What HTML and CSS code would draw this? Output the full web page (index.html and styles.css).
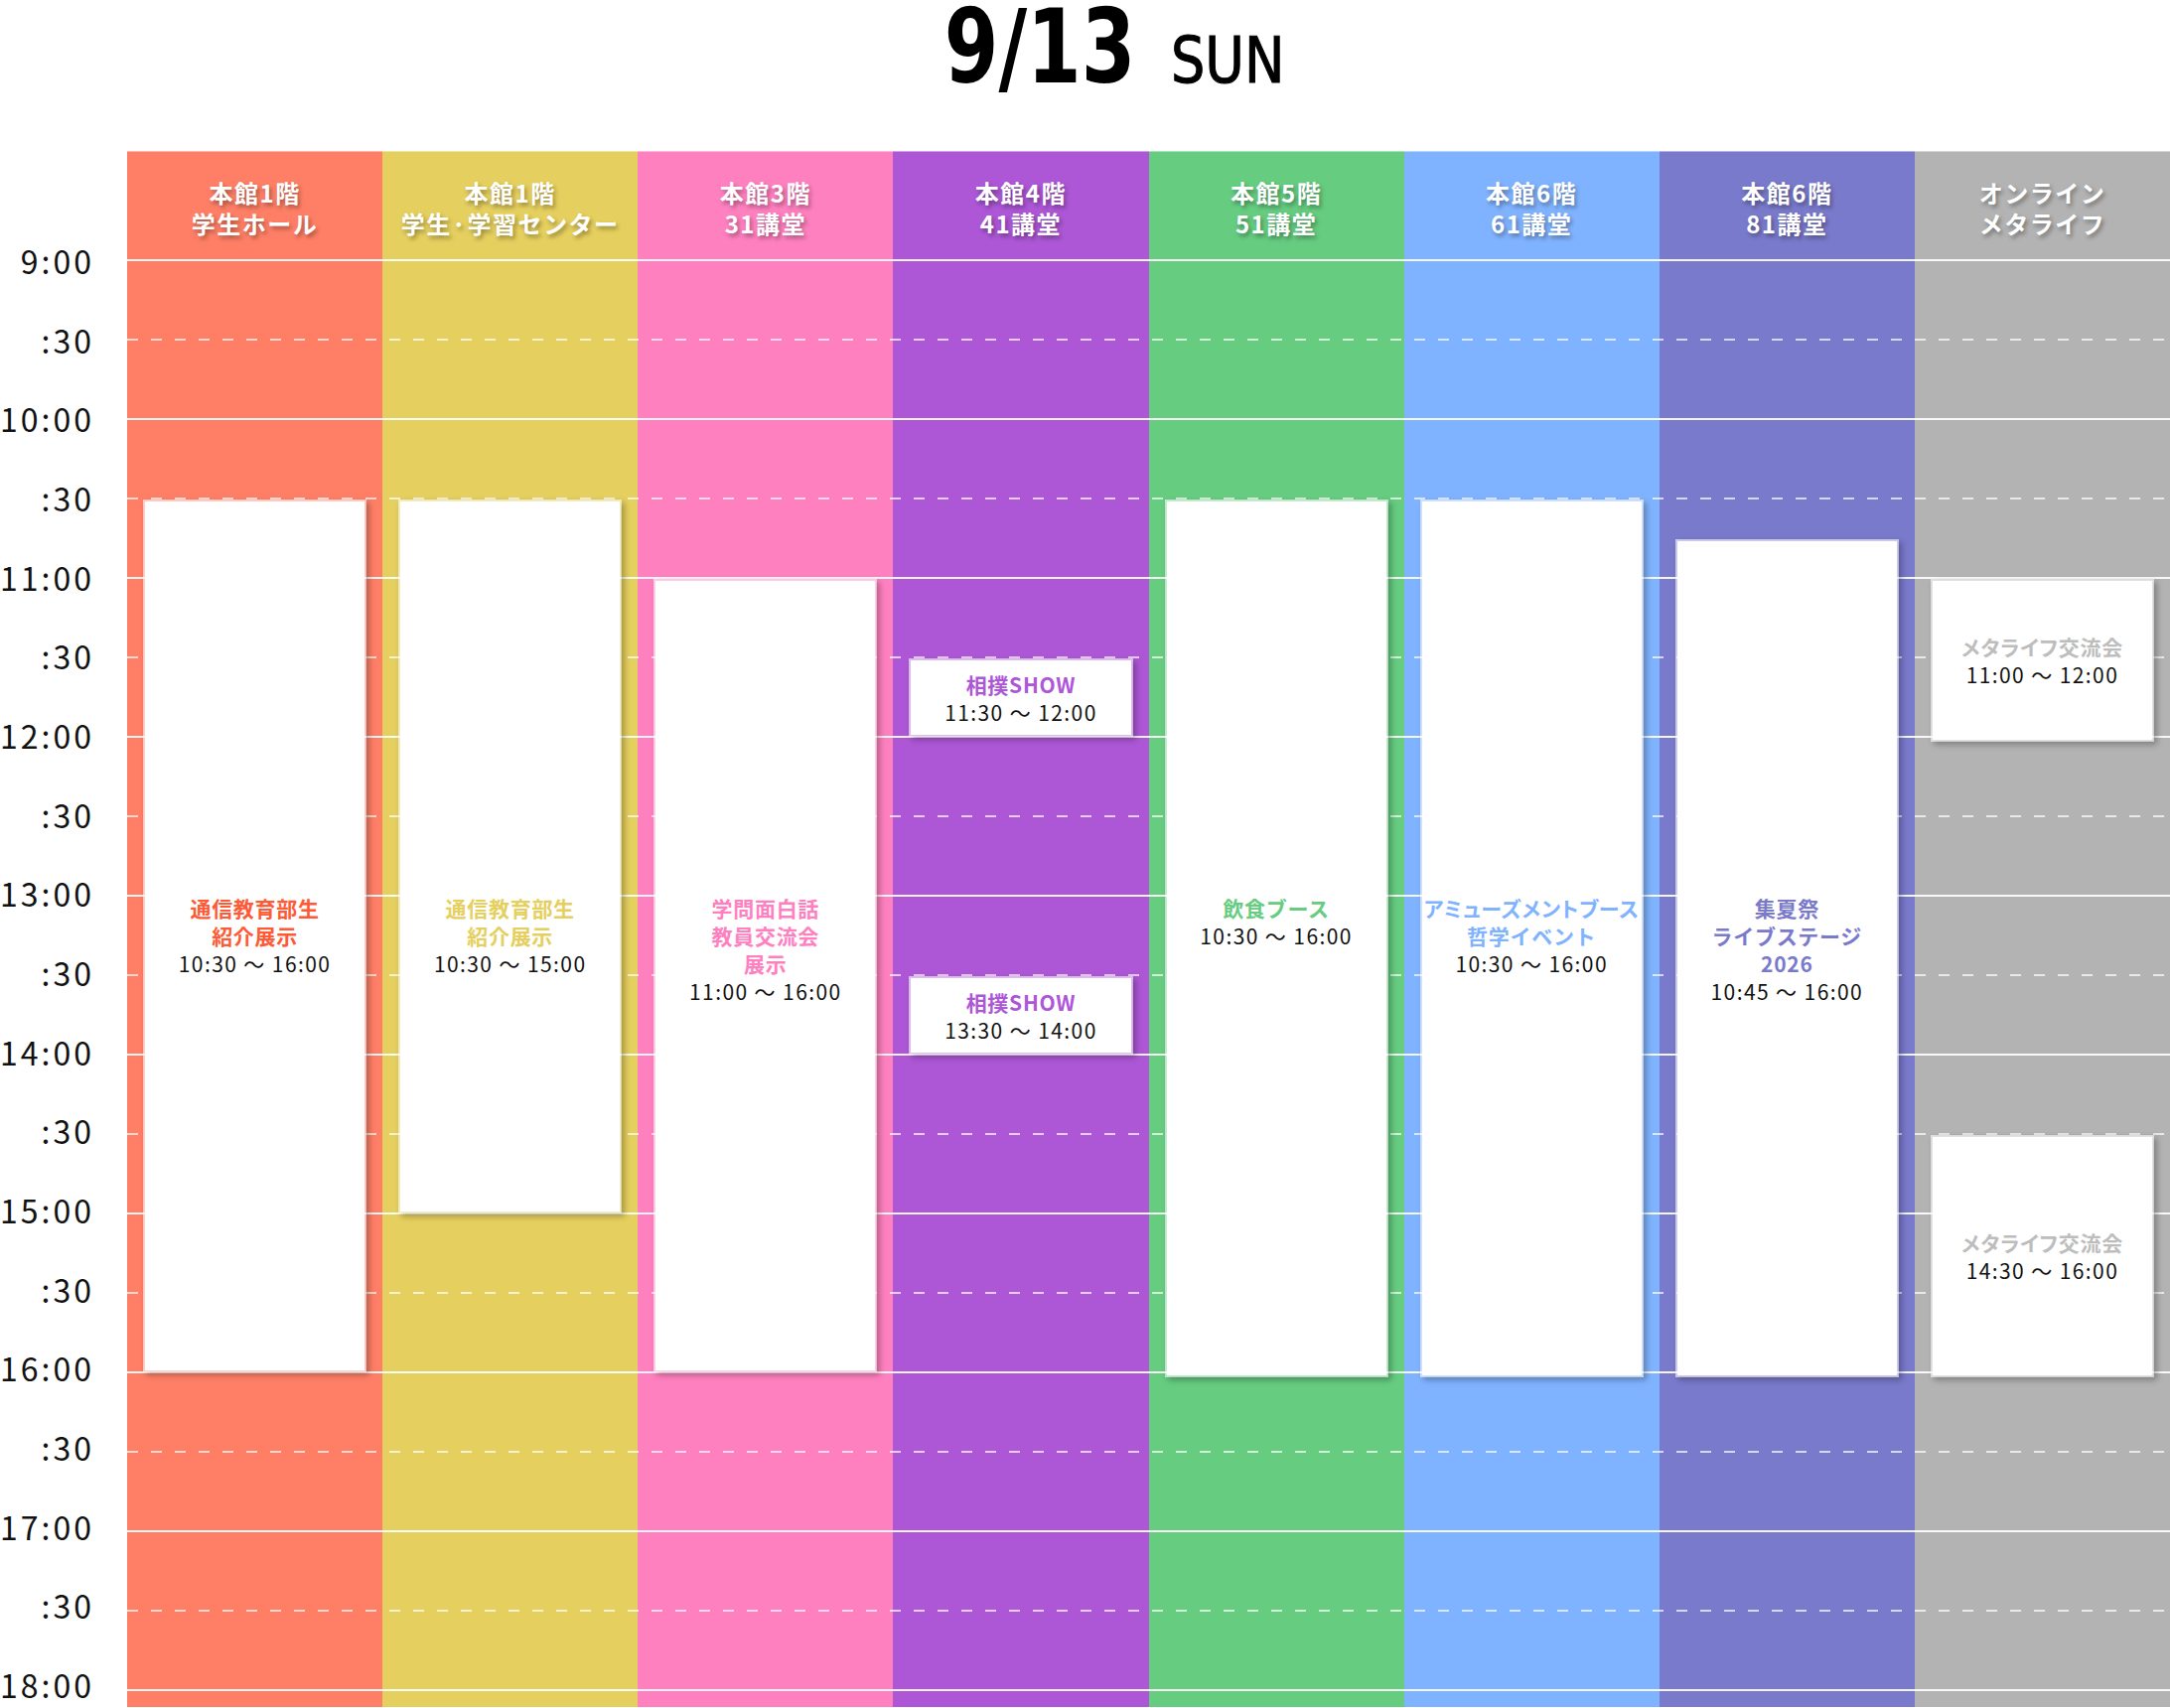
FILE: index.html
```html
<!DOCTYPE html>
<html lang="ja">
<head>
<meta charset="utf-8">
<title>9/13 SUN</title>
<link rel="stylesheet" href="styles.css">
</head>
<body>
<header class="title">
  <span class="date">9/13</span><span class="dow">SUN</span>
</header>
<main class="schedule">
  <div class="col c1"><div class="col-head">本館1階<br>学生ホール</div></div>
  <div class="col c2"><div class="col-head">本館1階<br>学生·学習センター</div></div>
  <div class="col c3"><div class="col-head">本館3階<br>31講堂</div></div>
  <div class="col c4"><div class="col-head">本館4階<br>41講堂</div></div>
  <div class="col c5"><div class="col-head">本館5階<br>51講堂</div></div>
  <div class="col c6"><div class="col-head">本館6階<br>61講堂</div></div>
  <div class="col c7"><div class="col-head">本館6階<br>81講堂</div></div>
  <div class="col c8"><div class="col-head">オンライン<br>メタライフ</div></div>

  <div class="line hour" style="grid-row:2"></div>
  <div class="line half" style="grid-row:4"></div>
  <div class="line hour" style="grid-row:6"></div>
  <div class="line half" style="grid-row:8"></div>
  <div class="line hour" style="grid-row:10"></div>
  <div class="line half" style="grid-row:12"></div>
  <div class="line hour" style="grid-row:14"></div>
  <div class="line half" style="grid-row:16"></div>
  <div class="line hour" style="grid-row:18"></div>
  <div class="line half" style="grid-row:20"></div>
  <div class="line hour" style="grid-row:22"></div>
  <div class="line half" style="grid-row:24"></div>
  <div class="line hour" style="grid-row:26"></div>
  <div class="line half" style="grid-row:28"></div>
  <div class="line hour" style="grid-row:30"></div>
  <div class="line half" style="grid-row:32"></div>
  <div class="line hour" style="grid-row:34"></div>
  <div class="line half" style="grid-row:36"></div>
  <div class="line hour" style="grid-row:38"></div>

  <div class="labels">
    <div class="tlabel">9:00</div>
    <div class="tlabel">:30</div>
    <div class="tlabel">10:00</div>
    <div class="tlabel">:30</div>
    <div class="tlabel">11:00</div>
    <div class="tlabel">:30</div>
    <div class="tlabel">12:00</div>
    <div class="tlabel">:30</div>
    <div class="tlabel">13:00</div>
    <div class="tlabel">:30</div>
    <div class="tlabel">14:00</div>
    <div class="tlabel">:30</div>
    <div class="tlabel">15:00</div>
    <div class="tlabel">:30</div>
    <div class="tlabel">16:00</div>
    <div class="tlabel">:30</div>
    <div class="tlabel">17:00</div>
    <div class="tlabel">:30</div>
    <div class="tlabel">18:00</div>
  </div>

  <div class="event c1 anchor" style="grid-row:8 / 30; --lead:10">
    <div class="ev-title">通信教育部生<br>紹介展示</div>
    <div class="ev-time">10:30 〜 16:00</div>
  </div>
  <div class="event c2 anchor" style="grid-row:8 / 26; --lead:10">
    <div class="ev-title">通信教育部生<br>紹介展示</div>
    <div class="ev-time">10:30 〜 15:00</div>
  </div>
  <div class="event c3 anchor" style="grid-row:10 / 30; --lead:8">
    <div class="ev-title">学問面白話<br>教員交流会<br>展示</div>
    <div class="ev-time">11:00 〜 16:00</div>
  </div>
  <div class="event c4" style="grid-row:12 / 14">
    <div class="ev-title">相撲SHOW</div>
    <div class="ev-time">11:30 〜 12:00</div>
  </div>
  <div class="event c4" style="grid-row:20 / 22">
    <div class="ev-title">相撲SHOW</div>
    <div class="ev-time">13:30 〜 14:00</div>
  </div>
  <div class="event c5 long anchor" style="grid-row:8 / 30; --lead:10">
    <div class="ev-title">飲食ブース</div>
    <div class="ev-time">10:30 〜 16:00</div>
  </div>
  <div class="event c6 long anchor" style="grid-row:8 / 30; --lead:10">
    <div class="ev-title"><span class="palt">アミューズメントブース</span><br>哲学イベント</div>
    <div class="ev-time">10:30 〜 16:00</div>
  </div>
  <div class="event c7 long anchor" style="grid-row:9 / 30; --lead:9">
    <div class="ev-title">集夏祭<br>ライブステージ<br>2026</div>
    <div class="ev-time">10:45 〜 16:00</div>
  </div>
  <div class="event c8 long" style="grid-row:10 / 14">
    <div class="ev-title palt">メタライフ交流会</div>
    <div class="ev-time">11:00 〜 12:00</div>
  </div>
  <div class="event c8 long" style="grid-row:24 / 30">
    <div class="ev-title palt">メタライフ交流会</div>
    <div class="ev-time">14:30 〜 16:00</div>
  </div>
</main>
</body>
</html>
```

FILE: styles.css
```css
html, body {
  margin: 0;
  padding: 0;
  background: #ffffff;
}

body {
  font-family: "Noto Sans CJK JP", "Noto Sans", sans-serif;
  color: #111111;
  overflow: hidden;
}

/* ---------- title ---------- */
.title {
  height: 152px;
  display: flex;
  justify-content: center;
  align-items: baseline;
  padding-left: 30px;
  box-sizing: border-box;
  color: #000000;
  font-family: "Liberation Sans Narrow", "DejaVu Sans Condensed", "Liberation Sans", sans-serif;
}

.date {
  display: inline-block;
  font-size: 104px;
  line-height: 94px;
  font-weight: 700;
  transform: scaleX(0.84);
  transform-origin: right center;
}

.dow {
  display: inline-block;
  font-size: 64px;
  line-height: 64px;
  font-weight: 400;
  margin-left: 35px;
  -webkit-text-stroke: 1px #000;
  transform: scaleX(0.94);
  transform-origin: left center;
}

/* ---------- schedule grid ---------- */
.schedule {
  display: grid;
  grid-template-columns: 128px repeat(8, 1fr);
  grid-template-rows: 110px repeat(36, 40px) 17px;
}

.col {
  grid-row: 1 / -1;
  box-shadow: inset 0 1px 0 rgba(255, 255, 255, 0.45);
}

.col-head {
  padding-top: 26px;
  text-align: center;
  color: #ffffff;
  font-weight: 700;
  font-size: 24px;
  line-height: 31px;
  letter-spacing: 1.5px;
  text-shadow: 2px 3px 4px rgba(0, 0, 0, 0.35);
}

.c1 { grid-column: 2; }
.c2 { grid-column: 3; }
.c3 { grid-column: 4; }
.c4 { grid-column: 5; }
.c5 { grid-column: 6; }
.c6 { grid-column: 7; }
.c7 { grid-column: 8; }
.c8 { grid-column: 9; }

.col.c1 { background: #ff7f66; }
.col.c2 { background: #e5cf5e; }
.col.c3 { background: #ff80bf; }
.col.c4 { background: #ad57d6; }
.col.c5 { background: #66cc80; }
.col.c6 { background: #80b3ff; }
.col.c7 { background: #7a7acc; }
.col.c8 { background: #b3b3b3; }

/* ---------- lines ---------- */
.line {
  grid-column: 2 / -1;
  align-self: start;
  height: 2px;
  margin-top: -1px;
}

.line.hour {
  background: rgba(255, 255, 255, 0.92);
}

.line.half {
  background: repeating-linear-gradient(to right,
    rgba(255, 255, 255, 0.7) 0 11px,
    transparent 11px 24px);
  height: 1.5px;
}

/* ---------- time labels ---------- */
.labels {
  grid-column: 1;
  grid-row: 2 / -1;
  display: flex;
  flex-direction: column;
  margin-top: -17px;
}

.tlabel {
  flex: 0 0 79.67px;
  line-height: 34px;
  font-size: 32px;
  letter-spacing: 3px;
  text-align: right;
  padding-right: 33px;
  color: #111111;
  white-space: nowrap;
}

.tlabel:last-child {
  flex-basis: 34px;
}

/* ---------- events ---------- */
.event {
  margin: 1px 16px 0;
  background: #ffffff;
  background-clip: padding-box;
  border: 2px solid rgba(255, 255, 255, 0.6);
  box-shadow: 3px 3px 6px rgba(0, 0, 0, 0.28);
  display: flex;
  flex-direction: column;
  justify-content: center;
  align-items: center;
  text-align: center;
  font-size: 21px;
  line-height: 28px;
  min-width: 0;
}

.event.long {
  margin-bottom: -5px;
}

/* long events keep their text level with the 13:00 line */
.event.anchor {
  justify-content: flex-start;
  padding-top: calc(var(--lead) * 40px - 5px);
}

.ev-title {
  font-weight: 700;
  letter-spacing: 0.7px;
  white-space: nowrap;
}

.palt {
  font-feature-settings: "palt";
}

.ev-time {
  color: #111111;
  letter-spacing: 1.4px;
  white-space: nowrap;
}

.event.c1 .ev-title { color: #ff5a36; }
.event.c2 .ev-title { color: #e5cf5e; }
.event.c3 .ev-title { color: #ff80bf; }
.event.c4 .ev-title { color: #ad57d6; }
.event.c5 .ev-title { color: #66cc80; }
.event.c6 .ev-title { color: #80b3ff; }
.event.c7 .ev-title { color: #7a7acc; }
.event.c8 .ev-title { color: #bdbdbd; }
```
